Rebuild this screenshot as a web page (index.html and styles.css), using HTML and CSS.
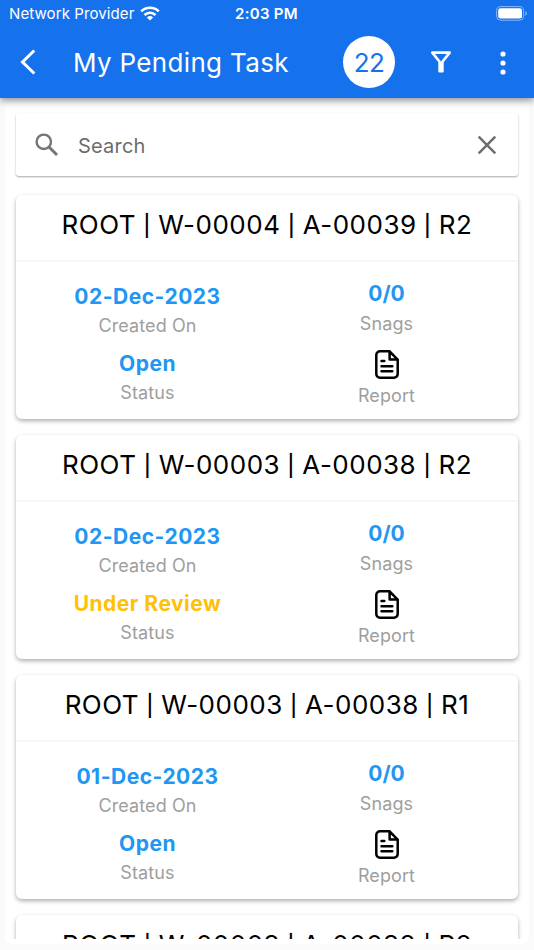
FILE: index.html
```
<!DOCTYPE html>
<html lang="en">
<head>
<meta charset="utf-8">
<title>My Pending Task</title>
<link rel="stylesheet" href="styles.css">
</head>
<body>
<svg class="defs" width="0" height="0">
  <symbol id="doc" viewBox="0 0 24 29">
    <path d="M5 1.3H14.6L22.7 9.6V24a3.7 3.7 0 0 1-3.7 3.7H5A3.7 3.7 0 0 1 1.3 24V5A3.7 3.7 0 0 1 5 1.3ZM14.6 1.3V9.6H22.7M6.5 11H9.3M6.5 16.2H17.3M6.5 21.3H17.3" fill="none" stroke="#000" stroke-width="2.5" stroke-linecap="round" stroke-linejoin="round"/>
  </symbol>
</svg>
<header class="header">
  <div class="status">
    <span class="carrier">Network Provider</span>
    <svg class="wifi" width="20" height="15" viewBox="0 0 20 15"><g fill="none" stroke="#fff" stroke-width="2.6"><path d="M1.2 5.4a12.6 12.6 0 0 1 17.6 0"/><path d="M4.5 9a7.8 7.8 0 0 1 11 0"/></g><path d="M10 14.6 6.9 11.5a4.5 4.5 0 0 1 6.2 0Z" fill="#fff"/></svg>
    <span class="time">2:03 PM</span>
    <svg class="battery" width="32" height="15" viewBox="0 0 32 15"><rect x=".6" y=".6" width="27" height="13.6" rx="4" fill="none" stroke="#8bb8f6" stroke-width="1"/><rect x="2.2" y="2.2" width="23.8" height="10.4" rx="2.4" fill="#fff"/><path d="M29.3 5c2 .7 2 4.1 0 4.8Z" fill="#8bb8f6"/></svg>
  </div>
  <div class="bar">
    <svg class="back" width="16" height="26" viewBox="0 0 16 26"><path d="M14.3 1.5 2.5 13 14.3 24.5" fill="none" stroke="#fff" stroke-width="3"/></svg>
    <h1 class="title">My Pending Task</h1>
    <span class="count">22</span>
    <svg class="filter" width="22" height="22" viewBox="0 0 22 22"><path d="M2.3 1.6H19.7L12.4 10.8V20.2H9.6V10.8Z" fill="none" stroke="#fff" stroke-width="2.6" stroke-linejoin="round"/><path d="M9 11h4v9H9Z" fill="#fff"/></svg>
    <svg class="more" width="6" height="24" viewBox="0 0 6 24"><g fill="#fff"><circle cx="3" cy="3" r="2.6"/><circle cx="3" cy="12" r="2.6"/><circle cx="3" cy="21" r="2.6"/></g></svg>
  </div>
</header>
<main class="panel">
  <div class="list">
    <div class="search">
      <svg class="lens" width="24" height="24" viewBox="0 0 24 24"><circle cx="8.8" cy="8.8" r="7.2" fill="none" stroke="#757575" stroke-width="2.4"/><path d="M14 14 22 22" stroke="#757575" stroke-width="3"/></svg>
      <span class="placeholder">Search</span>
      <svg class="clear" width="20" height="20" viewBox="0 0 20 20"><path d="M1.7 1.7 18.3 18.3M18.3 1.7 1.7 18.3" stroke="#6c6c6c" stroke-width="2.4"/></svg>
    </div>
    <article class="card">
      <h2 class="name">ROOT <i>|</i> W-00004 <i>|</i> A-00039 <i>|</i> R2</h2>
      <div class="body">
        <div class="col"><b class="value">02-Dec-2023</b><span class="label">Created On</span><b class="value second">Open</b><span class="label">Status</span></div>
        <div class="col right"><b class="value ratio">0/0</b><span class="label">Snags</span><svg class="doc"><use href="#doc"/></svg><span class="label">Report</span></div>
      </div>
    </article>
    <article class="card">
      <h2 class="name">ROOT <i>|</i> W-00003 <i>|</i> A-00038 <i>|</i> R2</h2>
      <div class="body">
        <div class="col"><b class="value">02-Dec-2023</b><span class="label">Created On</span><b class="value second review">Under Review</b><span class="label">Status</span></div>
        <div class="col right"><b class="value ratio">0/0</b><span class="label">Snags</span><svg class="doc"><use href="#doc"/></svg><span class="label">Report</span></div>
      </div>
    </article>
    <article class="card">
      <h2 class="name">ROOT <i>|</i> W-00003 <i>|</i> A-00038 <i>|</i> R1</h2>
      <div class="body">
        <div class="col"><b class="value">01-Dec-2023</b><span class="label">Created On</span><b class="value second">Open</b><span class="label">Status</span></div>
        <div class="col right"><b class="value ratio">0/0</b><span class="label">Snags</span><svg class="doc"><use href="#doc"/></svg><span class="label">Report</span></div>
      </div>
    </article>
    <article class="card">
      <h2 class="name">ROOT <i>|</i> W-00003 <i>|</i> A-00038 <i>|</i> R2</h2>
    </article>
  </div>
</main>
</body>
</html>
```
FILE: styles.css
```
* { box-sizing: border-box; }
body { margin: 0; height: 950px; overflow: hidden; background: #fafafa; font-family: Inter, sans-serif; display: flex; flex-direction: column; }
h1, h2 { margin: 0; font-weight: 400; }
svg { display: block; flex: none; }
.defs { position: absolute; }
.header { flex: none; height: 98px; background: #1672ec; color: #fff; box-shadow: 0 2px 8px rgba(0,0,0,.5); position: relative; z-index: 1; }
.status { height: 28px; display: grid; grid-template-columns: 131px 95px 1fr 32px; align-items: center; padding: 0 6px 0 9px; font-size: 15px; line-height: 28px; white-space: nowrap; }
.carrier { letter-spacing: .1px; }
.wifi { margin-top: -2px; }
.time { font-weight: 600; letter-spacing: .3px; }
.battery { margin-top: -2px; }
.bar { height: 68px; display: flex; align-items: center; padding: 0 28px 0 20px; }
.title { margin-left: 37px; width: 270px; padding-top: 1px; font-size: 26px; line-height: 32px; letter-spacing: .33px; white-space: nowrap; }
.count { width: 52px; height: 52px; border-radius: 50%; background: #fff; color: #1672ec; font-size: 26px; line-height: 53px; letter-spacing: -.6px; text-align: center; flex: none; }
.filter { margin-left: 35px; }
.more { margin: 2px 0 0 48px; }
.panel { margin: 0 5px; height: 846px; background: #fff; border-radius: 0 0 7px 7px; padding-bottom: 5px; }
.list { height: 841px; overflow: hidden; padding: 15px 11px 0; display: flex; flex-direction: column; }
.search { flex: none; height: 63px; border-radius: 3px; background: #fff; box-shadow: 0 1px 2px rgba(0,0,0,.34); display: flex; align-items: center; padding: 0 21px 0 19px; margin-bottom: 19px; }
.placeholder { flex: 1; margin-left: 19px; padding-top: 2px; color: #6c6c6c; font-size: 20px; letter-spacing: .2px; line-height: 26px; }
.card { flex: none; height: 224px; margin-bottom: 16px; border-radius: 6px; background: #fff; box-shadow: 0 2px 4px rgba(0,0,0,.32); }
.name { height: 67px; border-bottom: 2px solid #f7f7f7; text-align: center; color: #000; font-size: 26px; line-height: 59px; letter-spacing: .5px; word-spacing: -.6px; white-space: nowrap; }
.name i { font-style: normal; font-weight: 500; font-size: 21px; line-height: 1; vertical-align: 1px; }
.body { display: grid; grid-template-columns: 263px 215px; }
.col { display: flex; flex-direction: column; align-items: center; padding-top: 20px; }
.right { padding-top: 17px; }
.value { font-weight: 700; font-size: 21px; line-height: 30px; color: #2196f3; letter-spacing: .5px; white-space: nowrap; }
.ratio { letter-spacing: 0; margin-bottom: 1px; }
.label { font-size: 18px; line-height: 28px; color: #9e9e9e; letter-spacing: .1px; }
.second { margin-top: 9px; }
.review { color: #ffc107; }
.doc { width: 24px; height: 29px; margin: 12px 0 3px; }
```
